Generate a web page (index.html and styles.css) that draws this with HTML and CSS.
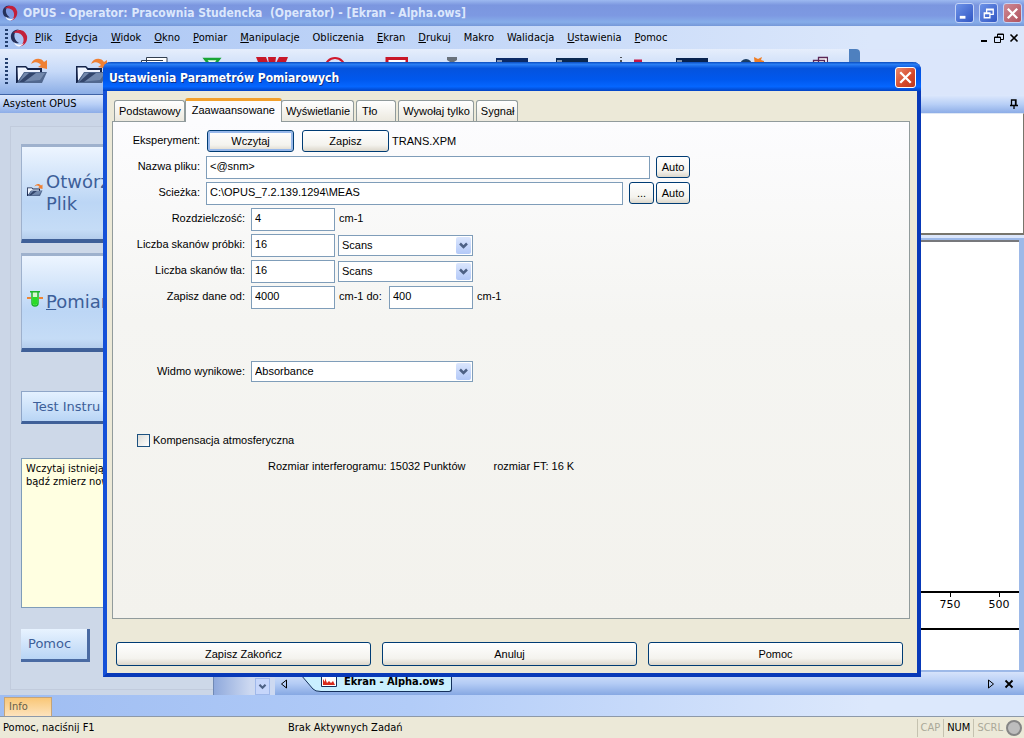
FILE: index.html
```html
<!DOCTYPE html>
<html lang="pl">
<head>
<meta charset="utf-8">
<title>OPUS</title>
<link rel="stylesheet" href="styles.css">
</head>
<body>
<svg class="defs" aria-hidden="true">
  <symbol id="logo" viewBox="0 0 18 18">
    <path d="M1 9C0 4 4 0 9 0.500C6 2 4 4 4.500 8C5 11 7 13 9 14C4 15 1.500 12 1 9Z" fill="#26305a"/>
    <path d="M3 4C7 -1 15 0 17 7C18 13 14 17 10 17.500C13 15 14.500 12 13 8C11.500 4 7 3 3 4Z" fill="#c3203a"/>
    <path d="M4 13C6 16 11 17 14 14C12.500 17 9 18 7 17C5.500 16.200 4.500 15 4 13Z" fill="#f6f8ff"/>
  </symbol>
  <symbol id="folder" viewBox="0 0 32 30">
    <path d="M0 10H10L12 12H26V27H0Z" fill="#15244a"/>
    <path d="M1.500 11.500H9.500L11.500 14H24V17H8L2 25Z" fill="#eef4ff"/>
    <path d="M1 27L8 16H31L26 27Z" fill="#51688f"/>
    <path d="M3 26L8.500 17H29L24 24Z" fill="#7389ad"/>
    <path d="M3 26L13 17H20L8 26Z" fill="#33466c"/>
    <path d="M15 8C17 2 25 1 28 6L31 4V13L22 11L25 9C22 5.500 19 5.500 15 8Z" fill="#ef8033"/>
  </symbol>
  <symbol id="chevron" viewBox="0 0 15 17">
    <path d="M4 6.500L7.500 10L11 6.500" fill="none" stroke="#4d6185" stroke-width="2.500"/>
  </symbol>
</svg>
<div class="app">
  <header class="titlebar">
    <svg class="logo"><use href="#logo"/></svg>
    <h1 class="app-title">OPUS - Operator: Pracownia Studencka&nbsp; (Operator) - [Ekran - Alpha.ows]</h1>
    <button class="win-btn" aria-label="Minimalizuj"><svg viewBox="0 0 18 18"><path d="M4 13H10" stroke="#fff" stroke-width="3"/></svg></button>
    <button class="win-btn" aria-label="Przywróć"><svg viewBox="0 0 18 18"><path d="M7 8V4.500H14V10H11M4.500 8.500H10.500V13.500H4.500ZM7 5H14M4 9H11" fill="none" stroke="#fff" stroke-width="1.400"/></svg></button>
    <button class="win-btn win-close" aria-label="Zamknij"><svg viewBox="0 0 18 18"><path d="M4 4L14 14M14 4L4 14" stroke="#fff" stroke-width="2.400"/></svg></button>
  </header>

  <nav class="menubar">
    <span class="grip"></span>
    <svg class="logo"><use href="#logo"/></svg>
    <div class="menu">
      <button><u>P</u>lik</button><button><u>E</u>dycja</button><button><u>W</u>idok</button><button><u>O</u>kno</button><button><u>P</u>omiar</button><button><u>M</u>anipulacje</button><button>Obliczenia</button><button><u>E</u>kran</button><button><u>D</u>rukuj</button><button>Makro</button><button>Walidacja</button><button><u>U</u>stawienia</button><button><u>P</u>omoc</button>
    </div>
    <div class="mdi">
      <button aria-label="Minimalizuj okno"><svg viewBox="0 0 10 10"><path d="M2 8H8" stroke="#000" stroke-width="2"/></svg></button>
      <button aria-label="Przywróć okno"><svg viewBox="0 0 10 10"><path d="M3.500 4V1H9.500V6.500H7M0.500 4H6.500V9.500H0.500ZM3 1.500H10M0 4.500H7" fill="none" stroke="#000"/></svg></button>
      <button aria-label="Zamknij okno"><svg viewBox="0 0 10 10"><path d="M1.500 1.500L8.500 8.500M8.500 1.500L1.500 8.500" stroke="#000" stroke-width="1.600"/></svg></button>
    </div>
  </nav>

  <div class="toolrow">
    <div class="toolbar">
      <span class="grip"></span>
      <div class="tools">
        <svg><use href="#folder"/></svg>
        <svg><use href="#folder"/></svg>
        <svg viewBox="0 0 32 30"><path d="M5.500 28V4.500H27M10.500 24V1.500H31V20" fill="#fff" stroke="#333f50"/></svg>
        <svg viewBox="0 0 32 30"><path d="M9 3H23L16 12Z" fill="#eaffea" stroke="#18a535" stroke-width="2.500"/></svg>
        <svg viewBox="0 0 32 30"><path d="M0 1H10L13 9L12 1H20L19 9L23 1H32L26 16L21 8L16 16L11 8L6 16Z" fill="#c81728"/></svg>
        <svg viewBox="0 0 32 30"><circle cx="19" cy="12" r="10" fill="none" stroke="#d0182c" stroke-width="2"/></svg>
        <svg viewBox="0 0 32 30"><path d="M11 2.500H31V20H11Z" fill="#fff" stroke="#c81728" stroke-width="3"/></svg>
        <svg viewBox="0 0 32 30"><path d="M11 1H21V4L18 6V14H14V6L11 4Z" fill="#69717b"/></svg>
        <svg viewBox="0 0 32 30"><path d="M0 2H32V22H0Z" fill="#0b2a66"/><path d="M1 5H6" stroke="#fff"/></svg>
        <svg viewBox="0 0 32 30"><path d="M0 2H32V22H0Z" fill="#0a2850"/><path d="M1 5H6" stroke="#fff"/></svg>
        <svg viewBox="0 0 32 30"><path d="M5 1V2M5 4V9" stroke="#222" stroke-width="1.500"/><path d="M18 3.500H26V10H18Z" fill="#c81745"/></svg>
        <svg viewBox="0 0 32 30"><path d="M0 2H32V22H0Z" fill="#08234f"/><path d="M1 5H6" stroke="#fff"/></svg>
        <svg viewBox="0 0 32 30"><circle cx="10" cy="9" r="6" fill="#1b3d63"/><path d="M18 1L22 3L26 1L25 4L28 5V11H19Z" fill="#ee7d24"/></svg>
        <svg viewBox="0 0 32 30"><path d="M22.500 9V1.500H31.500V8H28M17.500 10V4.500H28.500V10" fill="#fff" stroke="#5b2756" stroke-width="1.300"/></svg>
      </div>
      <span class="toolbar-end"></span>
    </div>
  </div>

  <div class="caption">
    <span>Asystent OPUS</span>
    <button class="pin" aria-label="Przypnij"><svg viewBox="0 0 10 10"><path d="M2.500 6V1H7V6M1 6.500H9M5 7V10M6.500 1V6" fill="none" stroke="#000" stroke-width="1.300"/></svg></button>
  </div>

  <main class="workspace">
    <aside class="assistant">
      <div class="assistant-frame">
        <button class="task"><svg viewBox="0 0 32 30"><use href="#folder"/></svg><span>Otwórz Plik</span></button>
        <button class="task"><svg viewBox="0 0 16 16"><path d="M0 7H4M12 7H16" stroke="#ed8435" stroke-width="2"/><path d="M3 0.800H13M5 1V12Q5 15 8 15Q11 15 11 12V1" fill="#d8f8d0" stroke="#1cb52a" stroke-width="1.500"/><path d="M5.500 6H10.500V13Q8 15 5.500 13Z" fill="#2bdc26"/></svg><span><u>P</u>omiar</span></button>
        <button class="test">Test Instru</button>
        <p class="note">Wczytaj istnieją<br>bądź zmierz now</p>
        <button class="help">Pomoc</button>
      </div>
    </aside>
    <section class="content">
      <div class="preview"></div>
      <div class="plot">
        <div class="plot-area"></div>
        <div class="axis"><span>750</span><span>500</span></div>
        <div class="plot-foot"></div>
      </div>
      <div class="doc-tabs">
        <span class="track"><svg class="drop"><use href="#chevron"/></svg></span>
        <button class="step" aria-label="Poprzednia karta"><svg viewBox="0 0 10 10"><path d="M7.500 1V9L2.500 5Z" fill="none" stroke="#000"/></svg></button>
        <button class="doc-tab">
          <svg class="slant" viewBox="0 0 20 20"><path d="M0 3L12 17Q14 19.500 20 19.500V0H0Z" fill="#c9efff"/><path d="M0 3L12 17Q14 19.500 20 19.500" fill="none" stroke="#14305c"/></svg>
          <span class="doc-name"><svg viewBox="0 0 16 12"><path d="M0.500 0.500H15.500V10.500H0.500Z" fill="#fff" stroke="#14305c"/><path d="M2 9V3L4 6V2L6 7L8 5L10 7L12 5L14 9Z" fill="#d82a1c"/></svg>Ekran - Alpha.ows</span>
        </button>
        <button class="step step-next" aria-label="Następna karta"><svg viewBox="0 0 10 10"><path d="M2.500 1V9L7.500 5Z" fill="none" stroke="#000"/></svg></button>
        <button class="step" aria-label="Zamknij kartę"><svg viewBox="0 0 10 10"><path d="M1.500 1.500L8.500 8.500M8.500 1.500L1.500 8.500" stroke="#000" stroke-width="1.800"/></svg></button>
      </div>
    </section>
  </main>

  <div class="infobar"><button>Info</button></div>
  <footer class="status">
    <span class="status-help">Pomoc, naciśnij F1</span>
    <span class="status-task">Brak Aktywnych Zadań</span>
    <span class="lock off">CAP</span><span class="lock">NUM</span><span class="lock off">SCRL</span>
    <span class="lamp"></span>
  </footer>

  <section class="dialog" role="dialog" aria-labelledby="dialog-title">
    <header class="dialog-head">
      <h2 id="dialog-title">Ustawienia Parametrów Pomiarowych</h2>
      <button class="dialog-close" aria-label="Zamknij"><svg viewBox="0 0 18 18"><path d="M4 4L14 14M14 4L4 14" stroke="#fff" stroke-width="2.200"/></svg></button>
    </header>
    <div class="dialog-body">
      <div class="tabs" role="tablist">
        <button role="tab">Podstawowy</button><button role="tab" class="active" aria-selected="true">Zaawaansowane</button><button role="tab">Wyświetlanie</button><button role="tab" class="short">Tło</button><button role="tab">Wywołaj tylko</button><button role="tab">Sygnał</button>
      </div>
      <form class="panel">
        <div class="row">
          <span class="label">Eksperyment:</span>
          <div class="pair"><button type="button" class="btn focus">Wczytaj</button><button type="button" class="btn">Zapisz</button></div>
          <span class="file">TRANS.XPM</span>
        </div>
        <div class="row">
          <label class="label" for="name">Nazwa pliku:</label>
          <input id="name" class="name" value="&lt;@snm&gt;">
          <button type="button" class="btn small">Auto</button>
        </div>
        <div class="row">
          <label class="label" for="path">Scieżka:</label>
          <input id="path" class="path" value="C:\OPUS_7.2.139.1294\MEAS">
          <button type="button" class="btn dots">...</button><button type="button" class="btn small next">Auto</button>
        </div>
        <div class="row wide">
          <label class="label" for="res">Rozdzielczość:</label>
          <input id="res" value="4"><span class="unit">cm-1</span>
        </div>
        <div class="row wide">
          <label class="label" for="sample">Liczba skanów próbki:</label>
          <input id="sample" value="16">
          <span class="select"><select aria-label="Jednostka skanów próbki"><option>Scans</option></select><svg><use href="#chevron"/></svg></span>
        </div>
        <div class="row wide">
          <label class="label" for="back">Liczba skanów tła:</label>
          <input id="back" value="16">
          <span class="select"><select aria-label="Jednostka skanów tła"><option>Scans</option></select><svg><use href="#chevron"/></svg></span>
        </div>
        <div class="row wide">
          <label class="label" for="from">Zapisz dane od:</label>
          <input id="from" value="4000"><label class="unit to" for="upto">cm-1 do:</label>
          <input id="upto" value="400"><span class="unit">cm-1</span>
        </div>
        <div class="row wide result">
          <label class="label" for="spec">Widmo wynikowe:</label>
          <span class="select long"><select id="spec"><option>Absorbance</option></select><svg><use href="#chevron"/></svg></span>
        </div>
        <label class="check"><input type="checkbox">Kompensacja atmosferyczna</label>
        <div class="sizes"><span>Rozmiar interferogramu: 15032 Punktów</span><span>rozmiar FT: 16 K</span></div>
      </form>
      <div class="actions">
        <button class="btn">Zapisz Zakończ</button><button class="btn">Anuluj</button><button class="btn">Pomoc</button>
      </div>
    </div>
  </section>
</div>
</body>
</html>
```

FILE: styles.css
```css
* { box-sizing: border-box; }
body { margin: 0; }
button, input, select { font: inherit; color: inherit; margin: 0; padding: 0; border: 0; border-radius: 0; background: none; }
button { cursor: pointer; white-space: nowrap; }
svg { display: block; flex: none; }
.defs { position: absolute; width: 0; height: 0; }

.app {
  position: relative;
  display: flex;
  flex-direction: column;
  min-height: 100vh;
  overflow: hidden;
  font: 11px/14px "DejaVu Sans Condensed", "DejaVu Sans", sans-serif;
  color: #000;
  background: #dbe6fb;
}

/* Main window */
.titlebar {
  display: flex;
  align-items: center;
  gap: 5px;
  height: 26px;
  padding: 0 2px;
  background: linear-gradient(#9db9f0, #7b96df 20%, #7d99e2 60%, #86ade9 85%, #7597d8);
}
.titlebar .logo { width: 16px; height: 16px; }
.app-title { flex: 1; margin: 0; font-size: 12px; line-height: 16px; font-weight: bold; color: #dbe7fc; white-space: nowrap; }
.win-btn { width: 19px; height: 20px; border: 1px solid #c3d3f7; border-radius: 3px; background: linear-gradient(135deg, #6d93e8, #3156c4); }
.win-close { background: linear-gradient(135deg, #cf8a95, #b0525e); }

.menubar { display: flex; align-items: center; height: 23px; padding: 0 5px; background: linear-gradient(90deg, #a9c5f4, #dbe7fb 85%); }
.grip { width: 3px; height: 18px; background: repeating-linear-gradient(#24406f 0 2px, transparent 2px 4px); }
.menubar .logo { width: 18px; height: 18px; margin: 0 7px 0 2px; }
.menu { display: flex; flex: 1; gap: 13px; }
.mdi { display: flex; gap: 5px; }
.mdi svg { width: 10px; height: 10px; }

.toolrow { height: 46px; background: #dbe6fb; }
.toolbar {
  display: flex;
  align-items: flex-start;
  width: 84%;
  height: 46px;
  border-bottom: 1px solid #3f63a6;
  border-radius: 0 4px 4px 0;
  background: linear-gradient(#e6eefc, #c6d9f8 50%, #8caee6);
  overflow: hidden;
}
.toolbar .grip { height: 28px; margin: 9px 8px 0 5px; }
.tools { display: flex; flex: 1; gap: 28px; padding-top: 7px; }
.tools svg { width: 32px; height: 30px; }
.toolbar-end { align-self: stretch; width: 11px; background: #4e80bf; }

.caption { display: flex; align-items: center; justify-content: space-between; height: 18px; padding: 0 5px 0 3px; background: linear-gradient(#dde8fc, #b9d0f7 50%, #8dade7); }
.pin svg { width: 10px; height: 10px; }

.workspace { display: flex; flex: 1; }
.assistant { display: flex; width: 213px; padding: 13px 0 5px 10px; background: #cbd6e7; }
.assistant-frame {
  display: flex;
  flex: 1;
  flex-direction: column;
  align-items: stretch;
  padding: 17px 20px 0 10px;
  border: 1px solid #c1cbdc;
  border-right: 0;
  background: #cdd8e8;
  color: #3d5f99;
  font-family: "DejaVu Sans", sans-serif;
}
.task {
  display: flex;
  align-items: center;
  gap: 3px;
  height: 99px;
  margin-bottom: 10px;
  padding-left: 5px;
  border-top: 3px solid #9eb1cd;
  border-left: 1px solid #9eb1cd;
  border-bottom: 4px solid #3f6098;
  background: linear-gradient(#edf5ff, #bcd6f5 60%, #c5dcf6 90%, #b4cdec);
  font-size: 18px;
  line-height: 22px;
  text-align: left;
  white-space: normal;
}
.task svg { width: 16px; height: 16px; margin-bottom: 6px; }
.task span { width: 74px; }
.test { height: 33px; margin-top: 29px; padding-left: 11px; border: 1px solid #8fa6c8; border-bottom: 3px solid #3f6098; background: linear-gradient(#e4f1ff, #b9d5f5); font-size: 13px; text-align: left; }
.note { height: 150px; margin: 34px 0 0; padding: 3px 4px; border: 1px solid #7f9db9; background: #ffffe1; color: #000; font: 11px/13px "DejaVu Sans Condensed", sans-serif; white-space: nowrap; }
.help { align-self: flex-start; height: 33px; margin-top: 21px; padding: 0 16px 0 7px; border-right: 3px solid #4a6ba3; border-bottom: 3px solid #4a6ba3; background: linear-gradient(#e8f3ff, #b9d5f5); font-size: 13px; }

.content { display: flex; flex: 1; flex-direction: column; min-width: 0; }
.preview { height: 122px; border: solid #77756c; border-width: 1px 1px 2px 0; border-top-color: #dfe8f5; background: #fff; }
.plot { display: flex; flex: 1; flex-direction: column; margin-top: 3px; border: solid #9db9e8; border-width: 2px 5px 2px 0; background: #fff; }
.plot-area { flex: 1; border-top: 2px solid #77787c; border-bottom: 2px solid #000; }
.axis { display: flex; justify-content: flex-end; gap: 9px; height: 35px; font: 11px/14px "DejaVu Sans", sans-serif; }
.axis span { width: 40px; text-align: center; background: linear-gradient(#000, #000) center top / 1px 4px no-repeat; padding-top: 5px; }
.plot-foot { height: 42px; border-top: 2px solid #000; }
.doc-tabs { display: flex; align-items: center; height: 23px; padding-right: 10px; background: linear-gradient(#d6e3fb, #b4ccf5 50%, #86a8e3); }
.track { display: flex; justify-content: flex-end; align-items: flex-end; align-self: stretch; width: 62px; padding-right: 5px; border-left: 1px solid #7089b5; background: linear-gradient(90deg, #8fa9dc, #cdd9f1 60%); }
.drop { width: 15px; height: 17px; border: 1px solid #9fb8ea; background: #c6d6fb; }
.step svg { width: 10px; height: 10px; }
.track + .step { margin-left: 4px; }
.step-next { margin: 0 8px 0 auto; }
.doc-tab { display: flex; align-self: flex-start; height: 20px; margin-left: 12px; font-weight: bold; }
.slant { width: 20px; height: 20px; }
.doc-name { display: flex; align-items: center; gap: 7px; height: 20px; padding: 0 7px 0 0; border: solid #14305c; border-width: 0 1px 1px 0; border-radius: 0 0 3px 0; background: #c9efff; }
.doc-name svg { width: 16px; height: 12px; }

.infobar { display: flex; align-items: flex-end; height: 22px; padding-left: 4px; border-bottom: 1px solid #8d99a9; background: linear-gradient(90deg, #9fbdf2, #b2ccf8 40%, #dce8fc 85%); }
.infobar button { height: 19px; padding: 0 23px 0 4px; border: 1px solid #c5a478; border-bottom: 0; background: linear-gradient(#f9c777, #fde3bd); color: #67604a; }
.status { display: flex; align-items: center; gap: 3px; height: 21px; padding: 0 2px 0 3px; background: #ece9d8; white-space: nowrap; }
.status-help { width: 282px; }
.status-task { flex: 1; }
.lock { padding: 2px 0 2px 3px; border-left: 1px solid #c5c2b0; }
.off { color: #aaa899; }
.lamp { width: 16px; height: 16px; border: 2px solid #858585; border-radius: 50%; background: #bdbdbd; }

/* Parameters window, floating over the workspace */
.dialog {
  position: absolute;
  inset: 62px 103px 61px;
  display: flex;
  flex-direction: column;
  border: solid #0839b8;
  border-width: 0 4px 4px;
  border-left-color: #1551d8;
  border-radius: 8px 8px 0 0;
  background: #ece9d8;
  font: 11px/14px "Liberation Sans", Arial, sans-serif;
}
.dialog-head {
  display: flex;
  align-items: center;
  justify-content: space-between;
  height: 29px;
  margin: 0 -4px;
  padding: 2px 5px 0 6px;
  border-radius: 8px 8px 0 0;
  background: linear-gradient(#0a4bbd, #2a7ff5 8%, #0553dd 22%, #0058ee 60%, #0566ff 85%, #0243c4);
}
.dialog-head h2 { margin: 0; font: bold 12px/16px "DejaVu Sans Condensed", sans-serif; color: #fff; text-shadow: 1px 1px 0 #0a2f87; }
.dialog-close { width: 21px; height: 21px; border: 1px solid #fff; border-radius: 3px; background: linear-gradient(135deg, #ec8a6c, #d4482a 60%, #b9391f); }
.dialog-close svg { width: 19px; height: 19px; }
.dialog-body { display: flex; flex: 1; flex-direction: column; padding: 7px 7px 7px 5px; }

.tabs { display: flex; align-items: flex-end; height: 23px; padding-left: 2px; }
.tabs button { height: 21px; margin-right: 2px; padding: 0 3px 0 4px; border: 1px solid #919b9c; border-bottom: 0; border-radius: 3px 3px 0 0; background: linear-gradient(#fff, #ece9df); }
.tabs .active { z-index: 1; height: 24px; margin: 0 -1px -1px -2px; padding: 0 6px 4px; border-top: 3px solid #f2a02c; background: #fcfcfe; }
.tabs .short { padding: 0 18px 0 5px; }

.panel { flex: 1; padding: 7px 12px 0 13px; border: 1px solid #919b9c; background: linear-gradient(#fcfcfe, #f5f5f2 40%, #f3f2ed); }
.row { display: flex; align-items: center; height: 24px; margin-bottom: 2px; }
.label { width: 74px; margin-right: 6px; padding-bottom: 2px; text-align: right; white-space: nowrap; }
.wide .label { width: 119px; }
.row input { width: 84px; height: 23px; padding: 0 3px 2px; border: 1px solid #7f9db9; background: #fff; }
.row .name { width: 444px; margin-right: 6px; }
.row .path { width: 417px; margin-right: 6px; }
.btn { height: 22px; border: 1px solid #003c74; border-radius: 3px; background: linear-gradient(#fff, #f4f3ee 70%, #dcd7cb); }
.pair { display: flex; gap: 8px; padding-left: 1px; }
.pair .btn { width: 87px; }
.focus { box-shadow: inset 0 0 0 2px #98b8ea; }
.file { margin-left: 3px; }
.small { width: 34px; }
.dots { width: 25px; }
.next { margin-left: 2px; }
.unit { margin-left: 4px; padding-bottom: 2px; }
.to { width: 50px; }
.select { position: relative; width: 135px; margin-left: 3px; }
.select select { display: block; width: 100%; height: 21px; padding: 0 20px 0 3px; border: 1px solid #7f9db9; appearance: none; background: #fff; }
.select svg { position: absolute; top: 2px; right: 2px; width: 15px; height: 17px; border-radius: 2px; background: linear-gradient(#dbe6fd, #b3c9f8); pointer-events: none; }
.result { margin-top: 50px; }
.result .label { padding-bottom: 0; }
.long { width: 222px; margin-left: 0; }
.check { display: flex; align-items: center; gap: 3px; width: fit-content; margin: 50px 0 0 11px; }
.check input { appearance: none; width: 13px; height: 13px; border: 1px solid #1c5180; background: linear-gradient(135deg, #dcdcd7, #fff); }
.sizes { display: flex; gap: 28px; padding: 12px 0 0 142px; }
.actions { display: grid; grid-template-columns: repeat(3, 1fr); gap: 11px; padding: 23px 7px 0 4px; }
.actions .btn { height: 24px; }
```
